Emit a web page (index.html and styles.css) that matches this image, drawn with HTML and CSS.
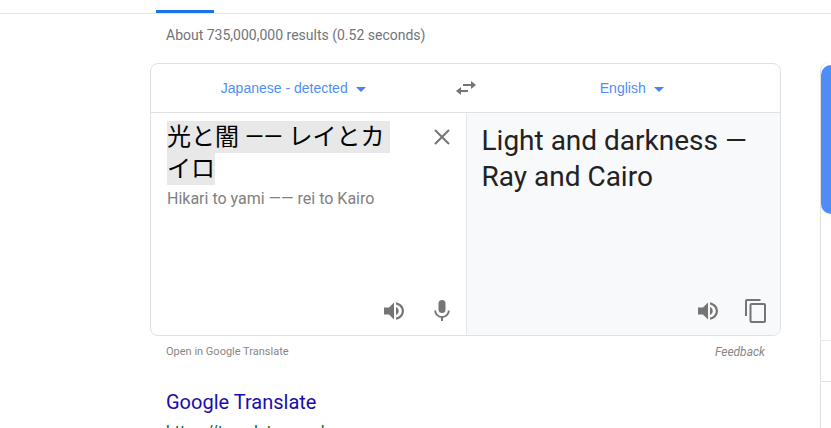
FILE: index.html
```html
<!DOCTYPE html>
<html lang="en">
<head>
<meta charset="utf-8">
<title>Search results</title>
<link rel="stylesheet" href="styles.css">
</head>
<body>
<nav class="tabs"><span class="tab-active"></span></nav>
<div class="page">
  <main class="results">
    <p class="stats">About 735,000,000 results (0.52 seconds)</p>
    <section class="card">
      <header class="langs">
        <button class="lang" type="button">Japanese - detected<span class="caret"></span></button>
        <button class="icon" type="button" aria-label="Swap languages">
          <svg width="20" height="14" viewBox="0 0 20 14"><path d="M7 3h8V0l5 4-5 4V5H7zM12 9H5V6l-5 4 5 4v-3h7z"/></svg>
        </button>
        <button class="lang" type="button">English<span class="caret"></span></button>
      </header>
      <div class="panes">
        <div class="pane source">
          <div class="entry">
            <textarea class="input" id="source" rows="2" aria-label="Enter text" spellcheck="false" lang="ja">光と闇 —— レイとカイロ</textarea>
            <button class="icon clear" type="button" aria-label="Clear text">
              <svg width="16" height="16" viewBox="0 0 16 16"><path class="stroke" d="M1 1l14 14M15 1L1 15"/></svg>
            </button>
          </div>
          <p class="romaji">Hikari to yami —— rei to Kairo</p>
          <div class="tools">
            <button class="icon" type="button" aria-label="Listen to source">
              <svg width="24" height="24" viewBox="0 0 24 24"><path d="M2 8.500v7h5l5 5V3.500l-5 5zM14 8v8c1.700-.7 2.700-2.200 2.700-4S15.700 8.700 14 8zM14 3.200v2.200c3.300.8 5.800 3.500 5.800 6.600s-2.500 5.800-5.800 6.600v2.200c4.700-.9 8-4.500 8-8.800s-3.300-7.900-8-8.800z"/></svg>
            </button>
            <button class="icon" type="button" aria-label="Voice input">
              <svg width="24" height="24" viewBox="0 0 24 24"><rect x="8.500" y="1" width="7" height="13" rx="3.500"/><path d="M17.800 11.500c0 3.500-2.800 5.500-5.800 5.500s-5.800-2-5.800-5.500H4.300c0 3.800 3 6.800 6.700 7.300V22h2v-3.200c3.700-.5 6.700-3.500 6.700-7.300z"/></svg>
            </button>
          </div>
        </div>
        <div class="pane target">
          <p class="output">Light and darkness — Ray and Cairo</p>
          <div class="tools">
            <button class="icon" type="button" aria-label="Listen to translation">
              <svg width="24" height="24" viewBox="0 0 24 24"><path d="M2 8.500v7h5l5 5V3.500l-5 5zM14 8v8c1.700-.7 2.700-2.200 2.700-4S15.700 8.700 14 8zM14 3.200v2.200c3.300.8 5.800 3.500 5.800 6.600s-2.500 5.800-5.800 6.600v2.200c4.700-.9 8-4.500 8-8.800s-3.300-7.900-8-8.800z"/></svg>
            </button>
            <button class="icon" type="button" aria-label="Copy translation">
              <svg width="24" height="24" viewBox="0 0 24 24"><path class="stroke" d="M2 17V2Q2 1 3 1H16.500"/><rect class="stroke" x="6.500" y="5" width="14.500" height="18" rx="1"/></svg>
            </button>
          </div>
        </div>
      </div>
    </section>
    <div class="links">
      <a href="#translate">Open in Google Translate</a>
      <a class="feedback" href="#feedback">Feedback</a>
    </div>
    <article class="result">
      <a class="title" href="#result">Google Translate</a>
      <cite class="url">https://translate.google.com</cite>
    </article>
  </main>
  <aside class="panel">
    <div class="banner"></div>
    <div class="row"></div>
    <div class="row-small"></div>
  </aside>
</div>
<script src="select.js"></script>
</body>
</html>
```
FILE: styles.css
```css
* {
  box-sizing: border-box;
}

body {
  margin: 0;
  height: 100vh;
  overflow: hidden;
  display: flex;
  flex-direction: column;
  background: #fff;
  font-family: Roboto, "Noto Sans CJK JP", sans-serif;
  color: #222;
}

p {
  margin: 0;
}

a {
  text-decoration: none;
  color: inherit;
}

button {
  border: 0;
  padding: 0;
  background: none;
  cursor: pointer;
}

svg {
  display: block;
  fill: #757575;
}

.stroke {
  fill: none;
  stroke: #757575;
  stroke-width: 2;
}

.tabs {
  display: flex;
  align-items: flex-end;
  flex: none;
  height: 14px;
  padding-left: 156px;
  border-bottom: 1px solid #e4e6e9;
}

.tab-active {
  width: 58px;
  height: 3px;
  background: #1a73e8;
}

.page {
  display: flex;
  align-items: flex-start;
  flex: 1;
  min-height: 0;
  padding-left: 150px;
}

.results {
  flex: 1;
  min-width: 0;
}

.stats {
  padding: 12px 16px 19px;
  font-size: 14px;
  line-height: 18px;
  color: #70757a;
}

.card {
  border: 1px solid #dfe1e5;
  border-radius: 8px;
  overflow: hidden;
}

.langs {
  display: grid;
  grid-template-columns: 1fr 24px 1fr;
  align-items: center;
  height: 49px;
  border-bottom: 1px solid #dfe1e5;
}

.icon {
  display: flex;
  align-items: center;
  justify-content: center;
}

.lang {
  display: flex;
  align-items: center;
  justify-content: center;
  gap: 8px;
  padding-right: 18px;
  font: 14px/20px "Liberation Sans", sans-serif;
  color: #4d8ff7;
}

.lang:last-child {
  padding-right: 0;
  padding-left: 6px;
}

.caret {
  margin-top: 3px;
  border: 5px solid transparent;
  border-top-color: #4285f4;
  border-bottom: 0;
}

.panes {
  display: grid;
  grid-template-columns: 1fr 1fr;
  min-height: 222px;
}

.pane {
  display: flex;
  flex-direction: column;
  padding: 8px 12px 12px 16px;
}

.target {
  border-left: 1px solid #e4e6ea;
  background: #f8f9fb;
}

.target {
  padding: 10px 12px 12px 15px;
}

.entry {
  display: flex;
  align-items: flex-start;
  justify-content: space-between;
}

.input {
  width: 224px;
  height: 64px;
  padding: 0;
  border: 0;
  outline: 0;
  resize: none;
  overflow: hidden;
  background: none;
  font: 24px/32px Roboto, "Noto Sans CJK JP", sans-serif;
  color: #000;
}

.input::selection {
  color: #000;
  background: #e8e8e8;
}

.clear {
  width: 24px;
  height: 32px;
}

.romaji {
  margin-top: 4px;
  font-size: 16px;
  line-height: 20px;
  color: #808080;
}

.output {
  font-size: 28px;
  line-height: 36px;
}

.tools {
  display: flex;
  justify-content: flex-end;
  gap: 24px;
  margin-top: auto;
}

.links {
  display: flex;
  justify-content: space-between;
  padding: 8px 16px 0;
  font-size: 11px;
  line-height: 16px;
  color: #878787;
}

.feedback {
  font-size: 12px;
  font-style: italic;
}

.result {
  display: flex;
  flex-direction: column;
  padding: 28px 16px 0;
}

.title {
  font-size: 20px;
  line-height: 28px;
  color: #1a0dab;
}

.url {
  margin-top: 6px;
  font-size: 16px;
  font-style: normal;
  line-height: 20px;
  color: #006621;
}

.panel {
  flex: none;
  align-self: stretch;
  width: 11px;
  margin: 49px 0 0 39px;
  padding-top: 2px;
  border-left: 1px solid #dfe1e5;
  border-top-left-radius: 8px;
}

.banner {
  height: 149px;
  border-radius: 12px 0 0 12px;
  background: #4f8df6;
}

.row {
  height: 127px;
  border-bottom: 1px solid #ebebeb;
}

.row-small {
  height: 41px;
  border-bottom: 1px solid #dfe1e5;
}
```
FILE: select.js
```js
const source = document.getElementById("source");
source.focus();
source.select();
```
